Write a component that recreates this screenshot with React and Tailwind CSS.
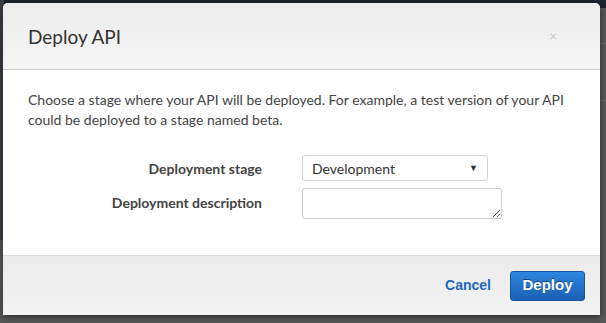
export default function App() {
  return (
    <div className="relative w-[606px] h-[323px] overflow-hidden bg-[#575757] font-['Lato','Liberation_Sans',sans-serif]">
      {/* backdrop page bits */}
      <div className="absolute left-0 top-0 w-full h-[8px] bg-[#1b232c]" />
      <div className="absolute left-0 top-0 w-[4px] h-[240px] bg-[#3a3f45]" />
      <div className="absolute right-0 top-[43px] w-[10px] h-px bg-[#6a6a6a]" />
      <div className="absolute right-0 top-[100px] w-[10px] h-px bg-[#6a6a6a]" />

      <div className="relative pl-[3px] pt-[3px]">
        <div className="w-[597px] h-[312px] flex flex-col rounded-t-[5px] overflow-hidden bg-white shadow-[0_2px_6px_rgba(0,0,0,0.5)]">
          <div className="h-[67px] flex items-center justify-between pl-[25px] pr-[43px] bg-gradient-to-b from-[#ececec] to-[#f6f6f6] border-b border-[#cfcfcf]">
            <h1 className="text-[19px] text-[#333] leading-none">Deploy API</h1>
            <span className="text-[13px] text-[#c4c4c4] leading-none">×</span>
          </div>

          <div className="flex-1 bg-white pl-[25px] pr-[20px] pt-[20px]">
            <p className="text-[14px] leading-[20px] text-[#444]">
              Choose a stage where your API will be deployed. For example, a test version of your API could be deployed to a stage named beta.
            </p>
            <div className="mt-[25px] grid grid-cols-[234px_1fr] gap-x-[40px] gap-y-[7px] items-center">
              <label className="text-right text-[14px] font-bold text-[#444]">Deployment stage</label>
              <div className="w-[186px] h-[26px] flex items-center justify-between px-[9px] border border-[#d5d5d5] rounded-[3px] bg-white">
                <span className="text-[14px] text-[#333]">Development</span>
                <span className="text-[9px] text-[#333]">▼</span>
              </div>
              <label className="text-right text-[14px] font-bold text-[#444] self-start mt-[4px]">Deployment description</label>
              <textarea className="w-[200px] h-[31px] border border-[#ccc] rounded-[3px] resize-y outline-none" />
            </div>
          </div>

          <div className="h-[60px] flex items-center justify-end gap-[19px] pr-[15px] bg-gradient-to-b from-[#ebebeb] to-[#f3f3f3] border-t border-[#dcdcdc]">
            <button className="font-['Liberation_Sans',Arial,sans-serif] text-[14px] font-bold text-[#1f68c0]">Cancel</button>
            <button className="w-[75px] h-[30px] rounded-[3px] border border-[#1a55a0] bg-gradient-to-b from-[#2f86de] to-[#1b60b4] font-['Liberation_Sans',Arial,sans-serif] text-[15px] font-bold text-white [text-shadow:0_-1px_0_rgba(0,0,0,0.5)]">
              Deploy
            </button>
          </div>
        </div>
      </div>
    </div>
  );
}
